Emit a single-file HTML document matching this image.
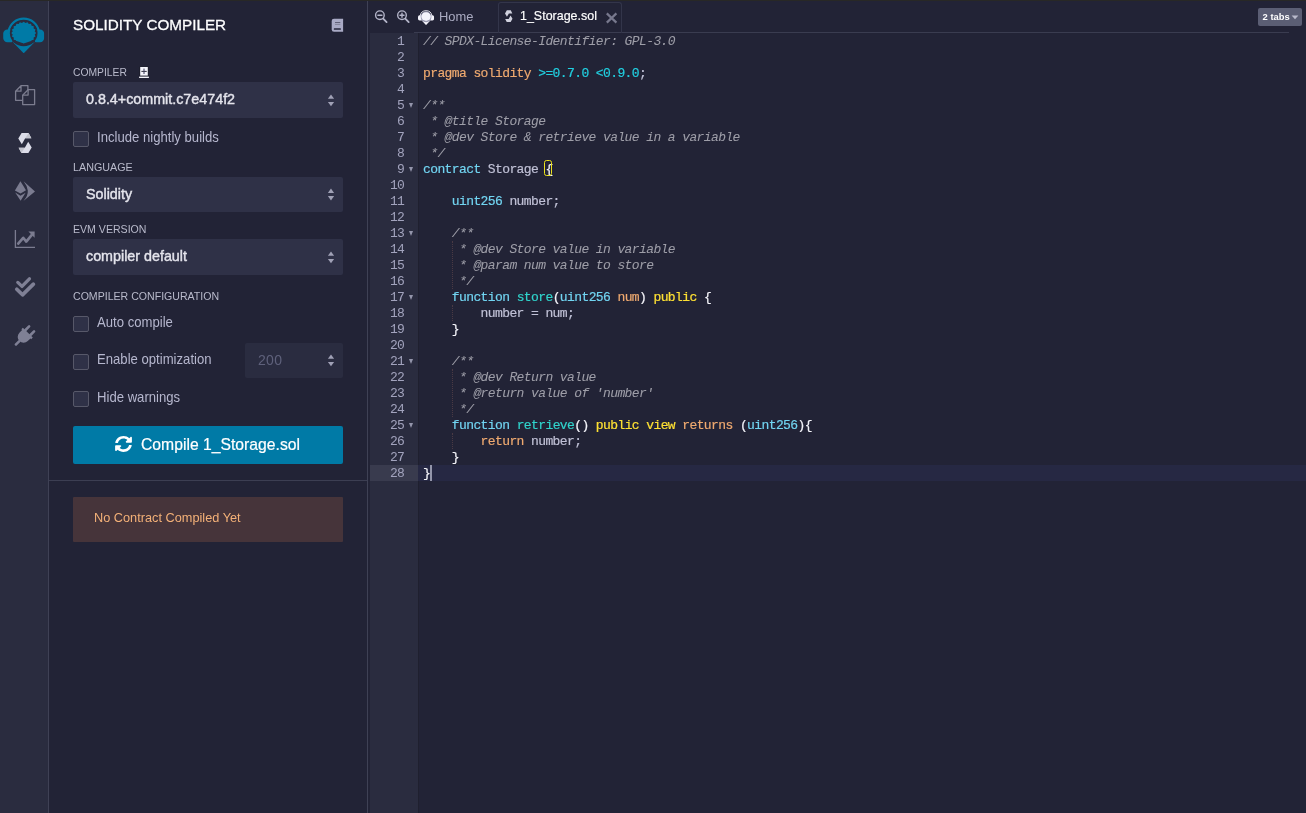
<!DOCTYPE html>
<html>
<head>
<meta charset="utf-8">
<title>Remix - Ethereum IDE</title>
<style>
*{box-sizing:border-box;margin:0;padding:0}
html,body{width:1306px;height:813px;overflow:hidden;background:#222336;font-family:"Liberation Sans",sans-serif;color:#a2a3bd}
#root{position:absolute;left:0;top:0;width:1306px;height:813px;will-change:transform;transform:translateZ(0)}
.abs{position:absolute}
svg{position:absolute;left:0;top:0;overflow:visible}
#topstrip{left:0;top:0;width:1306px;height:1px;background:#282826}
#iconbar{left:0;top:1px;width:48px;height:812px;background:#2a2c3f}
#iconbar-border{left:48px;top:1px;width:1px;height:812px;background:#3f4155}
#side{left:49px;top:1px;width:318px;height:812px;background:#222336}
#side-border{left:367px;top:1px;width:1px;height:812px;background:#3f4155}
.t{position:absolute;white-space:nowrap;line-height:1;transform-origin:0 50%}
.title{left:73px;top:16.6px;font-size:15.25px;color:#fdfdfe;-webkit-text-stroke:.3px #fdfdfe}
.lbl{font-size:11.7px;color:#b9bacb;left:73px;transform:scaleX(.905)}
.sel{position:absolute;left:73px;width:270px;height:35px;background:#2f3147;border-radius:2px}
.sel .v{position:absolute;left:13px;top:9.6px;font-size:14.6px;color:#e4e4ec;line-height:1;white-space:nowrap;-webkit-text-stroke:.4px #e4e4ec;transform-origin:0 50%;transform:scaleX(.98)}
.cb{position:absolute;left:73px;width:16px;height:16px;background:#2f3147;border:1px solid #575869;border-radius:2px}
.cbl{left:97.3px;font-size:14.2px;color:#b6b7ce;transform:scaleX(.925)}
#compile{left:73px;top:426px;width:270px;height:38px;background:#007aa6;border-radius:2px}
#compile .t{left:67.8px;top:10.2px;font-size:16.4px;color:#fff;-webkit-text-stroke:.2px #fff;transform:scaleX(.959)}
#hr{left:49px;top:480px;width:318px;height:1px;background:#3c3e52}
#warn{left:73px;top:497px;width:270px;height:45px;background:#46343a;border-radius:1px}
#warn .t{left:21px;top:14.4px;font-size:13.2px;color:#f4b178;transform:scaleX(.966)}
#runs{left:245px;top:343px;width:98px;height:35px;background:#2a2c40;border-radius:2px}
#runs .t{left:13px;top:10px;font-size:14px;color:#5f617b;letter-spacing:.3px}
/* tabs */
#tabline{left:414px;top:32px;width:875px;height:1px;background:#3a3c50}
#tab-active{left:498px;top:2px;width:124px;height:31px;border:1px solid #33354a;border-bottom:none;border-radius:3px 3px 0 0}
#tabsbtn{left:1258px;top:8px;width:44px;height:18px;background:#5b5e74;border-radius:2px}
#tabsbtn .t{left:4.6px;top:4.2px;font-size:9.4px;font-weight:bold;color:#fff}
/* editor */
#gutter{left:370px;top:33px;width:48px;height:780px}
#gutter-bg{left:370px;top:33px;width:48px;height:780px;background:#2a2c3f}
#gl-active{left:370px;top:465px;width:48px;height:16px;background:#393b4e}
#cl-active{left:418px;top:465px;width:888px;height:16px;background:#262843}
.ln{position:absolute;left:0;top:0;width:34.3px;height:16px;font-family:"Liberation Mono",monospace;font-size:13px;letter-spacing:-.6px;line-height:16px;color:#a2a3bd;text-align:right}
.fold{position:absolute;left:38.6px;top:5.8px;width:0;height:0;border-left:2.9px solid transparent;border-right:2.9px solid transparent;border-top:5.6px solid #9495ab}
#code{left:423px;top:33.5px;font-family:"Liberation Mono",monospace;font-size:13px;letter-spacing:-.601px;line-height:16px;color:#c0c1d6}
.cl{height:16px;white-space:pre;-webkit-text-stroke-width:.18px}
.c{color:#9e9ea8;font-style:italic;-webkit-text-stroke-width:.05px}
.k1{color:#f0aa70}.k2{color:#72d5f2}.k3{color:#22cfe0}.fn{color:#30d4cc}.kw{color:#ffe133}.w{color:#f4f4fa}.p{color:#c0c1d6}
.guide{position:absolute;left:452px;width:0;border-left:1px dotted rgba(160,110,100,.32)}
#brk{left:544px;top:160px;width:8.3px;height:16px;border:1px solid #ece31f;border-radius:2.5px}
#cursor{left:430px;top:465px;width:2px;height:16px;background:#9395aa}
</style>
</head>
<body>
<div id="root">
<div class="abs" id="iconbar"></div>
<div class="abs" id="iconbar-border"></div>
<div class="abs" id="side"></div>
<div class="abs" id="side-border"></div>
<div class="abs" id="topstrip"></div>

<!-- ICON BAR ICONS -->
<svg width="48" height="400" viewBox="0 0 48 400">
 <defs>
  <symbol id="logo" viewBox="3 17 41.4 36" preserveAspectRatio="none">
   <clipPath id="chin"><polygon points="0,0 48,0 48,35.3 23.7,43.4 0,35.3"/></clipPath>
   <path d="M8.6,31 A15.4,15.4 0 0 1 38.8,31" fill="none" stroke="currentColor" stroke-width="2.2"/>
   <rect x="3.2" y="29.6" width="12" height="12.6" rx="4.2" fill="currentColor"/>
   <rect x="32.2" y="29.6" width="12" height="12.6" rx="4.2" fill="currentColor"/>
   <polygon points="12.2,41.4 35.2,41.4 23.7,53.3" fill="currentColor"/>
   <ellipse cx="23.7" cy="33.2" rx="13.8" ry="13" class="lg-bg"/>
   <polygon points="12.4,38 35,38 35,42.1 23.7,46 12.4,42.1" class="lg-bg"/>
   <path d="M36.10,33.00 L34.72,34.59 L35.49,36.49 L33.64,37.62 L33.73,39.64 L31.59,40.19 L30.99,42.14 L28.77,42.06 L27.53,43.75 L25.45,43.04 L23.70,44.30 L21.95,43.04 L19.87,43.75 L18.63,42.06 L16.41,42.14 L15.81,40.19 L13.67,39.64 L13.76,37.62 L11.91,36.49 L12.68,34.59 L11.30,33.00 L12.68,31.41 L11.91,29.51 L13.76,28.38 L13.67,26.36 L15.81,25.81 L16.41,23.86 L18.63,23.94 L19.87,22.25 L21.95,22.96 L23.70,21.70 L25.45,22.96 L27.53,22.25 L28.77,23.94 L30.99,23.86 L31.59,25.81 L33.73,26.36 L33.64,28.38 L35.49,29.51 L34.72,31.41Z" fill="currentColor" clip-path="url(#chin)"/>
  </symbol>
 </defs>
 <style>.lg-bg{fill:var(--lgbg,#2a2c3f)}</style>
 <use href="#logo" x="3" y="17" width="41.4" height="36" style="color:#007aa6"/>
 <!-- files -->
 <g fill="none" stroke="#7c7d8f" stroke-width="1.3" stroke-linejoin="round">
  <path d="M21,85.7 H27.9 V100.3 H15.6 V91.2 Z M21,85.7 V91.2 H15.6"/>
  <path d="M28.1,89.7 H34.6 V104.6 H22.7 V95.1 Z" fill="#2a2c3f"/>
  <path d="M28.1,89.7 V95.1 H22.7"/>
 </g>
 <!-- solidity -->
 <g>
  <polygon points="21.6,133 28.6,133 31.4,138.3 25.2,138.3 21.8,144.2 18.3,138.4" fill="#dcdde9"/>
  <polygon points="28.6,133 31.4,138.3 25.2,138.3" fill="#c2c3cd"/>
  <polygon points="28.4,153 21.4,153 18.6,147.7 24.8,147.7 28.2,141.8 31.7,147.6" fill="#dcdde9"/>
  <polygon points="21.4,153 18.6,147.7 24.8,147.7" fill="#c2c3cd"/>
 </g>
 <!-- deploy -->
 <g fill="#7b7c90">
  <polygon points="20.4,181.2 26,190.3 20.5,193.6 14.9,190.4"/>
  <polygon points="15.2,192.6 20.5,195.8 25.6,192.8 20.6,200.8"/>
  <path d="M23.6,181.2 L35,191.4 L23.4,201 Q28.2,196 27.8,190.6 Q27.4,186 23.6,181.2Z"/>
 </g>
 <!-- chart -->
 <g fill="none" stroke="#7b7c90">
  <path d="M15.4,230 V247.4 H35" stroke-width="1.3"/>
  <path d="M18.2,243.6 L23.2,237.8 L26.3,241.6 L32,234.6" stroke-width="2.6" stroke-linecap="round" stroke-linejoin="round"/>
  <polygon points="28.4,231.6 34.6,231.6 34.6,237.8" fill="#7b7c90" stroke="none"/>
 </g>
 <!-- checks -->
 <g fill="none" stroke="#7f8095" stroke-linecap="round" stroke-linejoin="round">
  <path d="M17.8,282.4 L22,286.4 L29.4,278.8" stroke-width="3.3"/>
  <path d="M16.8,289.2 L22.5,294.8 L33.4,284.2" stroke-width="3.7"/>
 </g>
 <!-- plug -->
 <g transform="translate(24.3,336.2) rotate(45)" fill="#7f8095" stroke="none">
  <rect x="-4.8" y="-11.6" width="2.6" height="8" rx="1.3"/>
  <rect x="2.2" y="-11.6" width="2.6" height="8" rx="1.3"/>
  <path d="M-7,-5 H7 V-2.8 H5.9 V1 A5.9,5.9 0 0 1 -5.9,1 V-2.8 H-7Z"/>
  <rect x="-1.3" y="6" width="2.6" height="7" rx="1"/>
 </g>
</svg>

<!-- SIDE PANEL -->
<div class="t title">SOLIDITY COMPILER</div>
<svg width="400" height="100" viewBox="0 0 400 100">
 <!-- book -->
 <path d="M331.7,21 Q331.7,18.7 334,18.7 H343.1 V31.7 H334 Q331.7,31.7 331.7,29.4Z" fill="#a9aac5"/>
 <rect x="335" y="22.1" width="5.3" height="0.9" fill="#58596f"/>
 <rect x="335" y="23.9" width="5.3" height="0.9" fill="#7d7e92"/>
 <rect x="333.8" y="28.3" width="7.1" height="1.5" rx=".5" fill="#25263a"/>
 <!-- plus square -->
 <rect x="139.3" y="66.6" width="9.4" height="9.6" fill="#1d1e2c"/>
 <rect x="140.2" y="67" width="7.6" height="8.6" fill="#f4f4fb"/>
 <rect x="141.4" y="70.9" width="5.3" height="0.9" fill="#1a1a26"/>
 <rect x="143.5" y="68.6" width="1" height="5.4" fill="#3a3b5c"/>
 <rect x="139.1" y="76.6" width="9.8" height="1.4" fill="#f4f4fb"/>
</svg>
<div class="t lbl" style="top:66px;transform:scaleX(.884)">COMPILER</div>
<div class="sel" style="top:82px;height:35.8px"><span class="v">0.8.4+commit.c7e474f2</span></div>
<div class="cb" style="top:131px"></div>
<div class="t cbl" style="top:130px">Include nightly builds</div>
<div class="t lbl" style="top:161.2px;transform:scaleX(.92)">LANGUAGE</div>
<div class="sel" style="top:177px"><span class="v">Solidity</span></div>
<div class="t lbl" style="top:223.2px">EVM VERSION</div>
<div class="sel" style="top:239px;height:35.7px"><span class="v">compiler default</span></div>
<div class="t lbl" style="top:289.8px">COMPILER CONFIGURATION</div>
<div class="cb" style="top:316px"></div>
<div class="t cbl" style="top:314.9px">Auto compile</div>
<div class="cb" style="top:354px"></div>
<div class="t cbl" style="top:351.9px">Enable optimization</div>
<div class="abs" id="runs"><span class="t">200</span></div>
<div class="cb" style="top:391px"></div>
<div class="t cbl" style="top:389.9px">Hide warnings</div>
<div class="abs" id="compile"><span class="t">Compile 1_Storage.sol</span></div>
<div class="abs" id="hr"></div>
<div class="abs" id="warn"><span class="t">No Contract Compiled Yet</span></div>
<!-- select arrows -->
<svg width="400" height="400" viewBox="0 0 400 400" fill="#a0a1b6">
 <g id="ar"><polygon points="327.9,98.8 334.1,98.8 331,94.4"/><polygon points="327.9,102 334.1,102 331,106.3"/></g>
 <use href="#ar" y="94.1"/>
 <use href="#ar" y="157"/>
 <use href="#ar" y="260"/>
 <g transform="translate(115.1,436) scale(0.03387,0.0321) translate(-8,-8)" fill="#fff"><path d="M370.72 133.28C339.458 104.008 298.888 87.962 255.848 88c-77.458.068-144.328 53.178-162.791 126.85-1.344 5.363-6.122 9.15-11.651 9.15H24.103c-7.498 0-13.194-6.807-11.807-14.176C33.933 94.924 134.813 8 256 8c66.448 0 126.791 26.136 171.315 68.685L463.03 40.97C478.149 25.851 504 36.559 504 57.941V192c0 13.255-10.745 24-24 24H345.941c-21.382 0-32.09-25.851-16.971-40.971l41.75-41.749zM32 296h134.059c21.382 0 32.09 25.851 16.971 40.971l-41.75 41.75c31.262 29.273 71.835 45.319 114.876 45.28 77.418-.07 144.315-53.144 162.787-126.849 1.344-5.363 6.122-9.15 11.651-9.15h57.304c7.498 0 13.194 6.807 11.807 14.176C478.067 417.076 377.187 504 256 504c-66.448 0-126.791-26.136-171.315-68.685L48.97 471.03C33.851 486.149 8 475.441 8 454.059V320c0-13.255 10.745-24 24-24z"/></g>
</svg>

<!-- TABS -->
<div class="abs" id="tabline"></div>
<div class="abs" id="tab-active"></div>
<div class="t" style="left:439.4px;top:9.8px;font-size:13.1px;color:#a9aac0;transform:scaleX(.986)">Home</div>
<div class="t" style="left:520.3px;top:10.3px;font-size:12.9px;color:#fff;-webkit-text-stroke:.18px #fff;transform:scaleX(.967)" id="tabname">1_Storage.sol</div>
<div class="abs" id="tabsbtn"><span class="t">2 tabs</span></div>
<svg width="1306" height="40" viewBox="0 0 1306 40">
 <g fill="none" stroke="#b4b5c9" stroke-width="1.4" stroke-linecap="round">
  <circle cx="379.9" cy="15.2" r="4.3"/><path d="M383.2,18.6 L386.6,22.1" stroke-width="1.8"/><path d="M377.9,15.2 H381.9"/>
  <circle cx="402" cy="15.2" r="4.3"/><path d="M405.3,18.6 L408.7,22.1" stroke-width="1.8"/><path d="M400,15.2 H404 M402,13.2 V17.2"/>
 </g>
 
 <use href="#logo" x="417.9" y="10" width="16.3" height="15" style="color:#f4f4fb;--lgbg:#9a9bb2"/>
 <!-- tab sol icon -->
 <g transform="translate(505,10.3) scale(.56,.585) translate(-18.3,-133)">
  <polygon points="21.6,133 28.6,133 31.4,138.3 25.2,138.3 21.8,144.2 18.3,138.4" fill="#d0d1de"/>
  <polygon points="28.4,153 21.4,153 18.6,147.7 24.8,147.7 28.2,141.8 31.7,147.6" fill="#d0d1de"/>
 </g>
 <path d="M606.8,13.4 L616.4,22.6 M616.4,13.4 L606.8,22.6" stroke="#77788d" stroke-width="2.2" fill="none"/>
 <polygon points="1291.6,15.6 1298.4,15.6 1295,19.2" fill="#b9bacb"/>
</svg>

<!-- EDITOR -->
<div class="abs" id="gutter-bg"></div>
<div class="abs" id="gl-active"></div>
<div class="abs" id="gutter">
<div class="ln" style="top:0.5px">1</div>
<div class="ln" style="top:16.5px">2</div>
<div class="ln" style="top:32.5px">3</div>
<div class="ln" style="top:48.5px">4</div>
<div class="ln" style="top:64.5px">5<b class="fold"></b></div>
<div class="ln" style="top:80.5px">6</div>
<div class="ln" style="top:96.5px">7</div>
<div class="ln" style="top:112.5px">8</div>
<div class="ln" style="top:128.5px">9<b class="fold"></b></div>
<div class="ln" style="top:144.5px">10</div>
<div class="ln" style="top:160.5px">11</div>
<div class="ln" style="top:176.5px">12</div>
<div class="ln" style="top:192.5px">13<b class="fold"></b></div>
<div class="ln" style="top:208.5px">14</div>
<div class="ln" style="top:224.5px">15</div>
<div class="ln" style="top:240.5px">16</div>
<div class="ln" style="top:256.5px">17<b class="fold"></b></div>
<div class="ln" style="top:272.5px">18</div>
<div class="ln" style="top:288.5px">19</div>
<div class="ln" style="top:304.5px">20</div>
<div class="ln" style="top:320.5px">21<b class="fold"></b></div>
<div class="ln" style="top:336.5px">22</div>
<div class="ln" style="top:352.5px">23</div>
<div class="ln" style="top:368.5px">24</div>
<div class="ln" style="top:384.5px">25<b class="fold"></b></div>
<div class="ln" style="top:400.5px">26</div>
<div class="ln" style="top:416.5px">27</div>
<div class="ln" style="top:432.5px">28</div>
</div>
<div class="abs" style="left:418px;top:33px;width:1px;height:780px;background:#1f202f"></div>
<div class="abs" id="cl-active"></div>
<div class="guide" style="top:241px;height:48px"></div>
<div class="guide" style="top:305px;height:16px"></div>
<div class="guide" style="top:369px;height:48px"></div>
<div class="guide" style="top:433px;height:16px"></div>
<div class="abs" id="code">
<div class="cl"><span class="c">// SPDX-License-Identifier: GPL-3.0</span></div>
<div class="cl"></div>
<div class="cl"><span class="k1">pragma solidity</span><span class="p"> </span><span class="k3">&gt;=0.7.0 &lt;0.9.0</span><span class="p">;</span></div>
<div class="cl"></div>
<div class="cl"><span class="c">/**</span></div>
<div class="cl"><span class="c"> * @title Storage</span></div>
<div class="cl"><span class="c"> * @dev Store &amp; retrieve value in a variable</span></div>
<div class="cl"><span class="c"> */</span></div>
<div class="cl"><span class="k2">contract</span><span class="p"> Storage </span><span class="w">{</span></div>
<div class="cl"></div>
<div class="cl"><span class="p">    </span><span class="k2">uint256</span><span class="p"> number;</span></div>
<div class="cl"></div>
<div class="cl"><span class="p">    </span><span class="c">/**</span></div>
<div class="cl"><span class="p">    </span><span class="c"> * @dev Store value in variable</span></div>
<div class="cl"><span class="p">    </span><span class="c"> * @param num value to store</span></div>
<div class="cl"><span class="p">    </span><span class="c"> */</span></div>
<div class="cl"><span class="p">    </span><span class="k2">function</span><span class="p"> </span><span class="fn">store</span><span class="w">(</span><span class="k2">uint256</span><span class="p"> </span><span class="k1">num</span><span class="w">)</span><span class="p"> </span><span class="kw">public</span><span class="p"> </span><span class="w">{</span></div>
<div class="cl"><span class="p">        number = num;</span></div>
<div class="cl"><span class="p">    </span><span class="w">}</span></div>
<div class="cl"></div>
<div class="cl"><span class="p">    </span><span class="c">/**</span></div>
<div class="cl"><span class="p">    </span><span class="c"> * @dev Return value </span></div>
<div class="cl"><span class="p">    </span><span class="c"> * @return value of &#x27;number&#x27;</span></div>
<div class="cl"><span class="p">    </span><span class="c"> */</span></div>
<div class="cl"><span class="p">    </span><span class="k2">function</span><span class="p"> </span><span class="fn">retrieve</span><span class="w">()</span><span class="p"> </span><span class="kw">public</span><span class="p"> </span><span class="kw">view</span><span class="p"> </span><span class="k1">returns</span><span class="p"> </span><span class="w">(</span><span class="k2">uint256</span><span class="w">){</span></div>
<div class="cl"><span class="p">        </span><span class="k1">return</span><span class="p"> number;</span></div>
<div class="cl"><span class="p">    </span><span class="w">}</span></div>
<div class="cl"><span class="w">}</span></div>
</div>
<div class="abs" id="brk"></div>
<div class="abs" id="cursor"></div>
</div>
</body>
</html>
